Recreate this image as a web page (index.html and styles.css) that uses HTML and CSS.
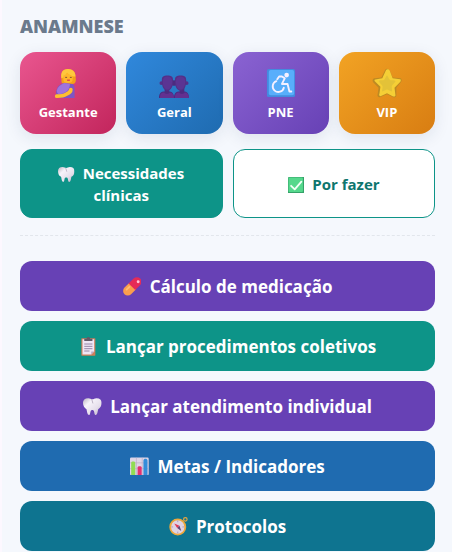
FILE: index.html
```html
<!DOCTYPE html>
<html lang="pt-BR">
<head>
    <meta charset="UTF-8">
    <meta name="viewport" content="width=device-width, initial-scale=1.0">
    <title>Anamnese</title>
    <link rel="stylesheet" href="styles.css">
</head>
<body>

<svg class="defs" aria-hidden="true">
    <defs>
        <linearGradient id="toothFill" x1="0" y1="0" x2="1" y2="1">
            <stop offset="0" stop-color="#b9b3bf"/>
            <stop offset="0.3" stop-color="#f7f3fa"/>
            <stop offset="0.65" stop-color="#e6dfeb"/>
            <stop offset="1" stop-color="#b9a9c4"/>
        </linearGradient>
    </defs>
    <symbol id="tooth" viewBox="0 0 32 32">
        <path fill="url(#toothFill)" d="M9 2C3 2 0 5 0 10c0 5 2 9 6 11 1 4 1 9 4 10 3 0 2-7 4-8 1-1 3-1 4 0 2 2 1 8 4 8 3-1 3-6 4-10 4-2 6-6 6-11 0-5-3-8-9-8-3 0-5 2-7 2S12 2 9 2z"/>
        <path fill="none" stroke="#b5aabd" stroke-width="1.5" d="M15 4l2 7"/>
    </symbol>
</svg>

<main class="panel">
    <h2 class="section-title">ANAMNESE</h2>

    <div class="tiles">
        <button type="button" class="tile tile-gestante">
            <svg class="tile-icon" viewBox="0 0 32 32" aria-hidden="true">
                <path fill="#f4a018" d="M9 12C8 5 10 1 16 1c6 0 8 4 8 8 1 5 0 8-3 8h-9c-3 0-3-2-3-5z"/>
                <path fill="#ffc83d" d="M9 11c-1-6 1-10 7-10 5 0 8 3 8 8-5 0-7-2-9-4-1 3-3 5-6 6z"/>
                <path fill="#ffb72b" d="M11 8c2 0 3-2 4-3 2 2 4 3 6 4v3c0 3-2 4-5 4s-5-1-5-4z"/>
                <path fill="#7e55c4" d="M12 16l9 1c2 1 2 4 2 7v8H8c-4-2-6-5-4-9 1-4 4-6 8-7z"/>
                <path fill="#a073dc" d="M12 16c-4 2-7 4-8 8 0 2 1 4 3 4 7-1 11-5 11-11z"/>
                <path fill="none" stroke="#ffc02e" stroke-width="4" stroke-linecap="round" stroke-linejoin="round" d="M19 23c0 2-2 4-5 5-3 2-6 2-10 2"/>
                <path fill="none" stroke="#78513a" stroke-width="1" d="M13 10h2M18 10h2"/>
                <path fill="none" stroke="#dc334c" stroke-width="1.3" d="M15 13h3"/>
            </svg>
            <span>Gestante</span>
        </button>
        <button type="button" class="tile tile-geral">
            <svg class="tile-icon" viewBox="0 0 32 32" aria-hidden="true">
                <path fill="#4c2b80" d="M0 32c0-5 2-7 6-7h4c4 0 6 2 6 7zM16 32c0-5 2-7 6-7h4c4 0 6 2 6 7z"/>
                <path fill="#633090" d="M1 32c0-4 1-6 5-6 1 2 4 2 5 0 3 0 5 2 5 6zM17 32c0-4 1-6 5-6 1 2 4 2 5 0 3 0 5 2 5 6z"/>
                <path fill="#4c2b80" d="M6 20h5v7H6zM22 20h5v7h-5z"/>
                <circle cx="2.500" cy="16" r="2" fill="#54308a"/>
                <circle cx="16" cy="16" r="3" fill="#4c2b80"/>
                <circle cx="29.500" cy="16" r="2" fill="#54308a"/>
                <path fill="#533087" d="M3 13c0-4 2-5 6-5s6 1 6 5c0 7-2 11-6 11s-6-4-6-11zM17 13c0-4 2-5 6-5s6 1 6 5c0 7-2 11-6 11s-6-4-6-11z"/>
                <path fill="#5b3493" d="M4 14c0-3 2-5 5-5s5 2 5 5c0 5-2 9-5 9s-5-4-5-9zM18 14c0-3 2-5 5-5s5 2 5 5c0 5-2 9-5 9s-5-4-5-9z"/>
            </svg>
            <span>Geral</span>
        </button>
        <button type="button" class="tile tile-pne">
            <svg class="tile-icon" viewBox="0 0 32 32" aria-hidden="true">
                <rect x="1" y="1" width="30" height="30" rx="2" fill="#438bdf"/>
                <rect x="3" y="2" width="27" height="27" rx="2" fill="#58aefb"/>
                <circle cx="22" cy="7.500" r="2.500" fill="#f5f0ff"/>
                <g fill="none" stroke="#f5f0ff" stroke-width="2" stroke-linecap="round" stroke-linejoin="round">
                    <path d="M12 12l2-3h3l3 2-3 6h6l2 8h2"/>
                    <path d="M11 14a6 6 0 1 0 8 7"/>
                </g>
            </svg>
            <span>PNE</span>
        </button>
        <button type="button" class="tile tile-vip">
            <svg class="tile-icon" viewBox="0 0 32 32" aria-hidden="true">
                <path fill="#bd8a23" d="M14 2c1-2 4-1 5 1l3 7 8 1c2 0 2 3 1 4l-5 6v8c0 2-2 3-4 2l-6-3-7 3c-2 1-4-1-3-3l1-7-6-6c-1-2 0-4 2-4l7-1z"/>
                <path fill="#f5cf36" d="M15 2c1-1 3-1 4 1l3 8 8 1c1 0 1 2 0 3l-6 6 1 8c0 1-1 2-3 1l-6-3-7 3c-1 0-2-1-1-3l1-7-6-6c-1-1 0-2 2-2l6-1z"/>
                <path fill="#e3c238" d="M16 8c1 0 2 5 4 5s5 0 5 1-4 4-4 6 1 5 0 5-4-2-5-2-4 2-5 2 1-4 0-6-4-4-4-5 3-1 5-1 3-5 4-5z"/>
            </svg>
            <span>VIP</span>
        </button>
    </div>

    <div class="filters">
        <button type="button" class="filter filter-active">
            <svg class="emoji" viewBox="0 0 32 32" aria-hidden="true"><use href="#tooth"/></svg>
            Necessidades clínicas
        </button>
        <button type="button" class="filter">
            <svg class="emoji" viewBox="0 0 32 32" aria-hidden="true">
                <rect x="0" y="0" width="32" height="32" rx="2" fill="#35a269"/>
                <rect x="1" y="1" width="28" height="28" rx="2" fill="#55d88c"/>
                <path fill="none" stroke="#f2fff7" stroke-width="3.500" stroke-linecap="round" stroke-linejoin="round" d="M6 17l7 7L26 9"/>
            </svg>
            Por fazer
        </button>
    </div>

    <hr class="divider">

    <nav class="actions">
        <button type="button" class="action purple">
            <svg class="emoji" viewBox="0 0 32 32" aria-hidden="true">
                <g transform="rotate(-45 16 16)">
                    <path fill="#fa9e4d" d="M17 8H5a8 8 0 0 0 0 16h12z"/>
                    <path fill="#e52b57" d="M15 8h12a8 8 0 0 1 0 16H15z"/>
                    <path fill="none" stroke="#ffbd71" stroke-width="3" stroke-linecap="round" d="M5 13h7"/>
                </g>
                <circle cx="26" cy="8" r="2.500" fill="#ffc5d7"/>
            </svg>
            Cálculo de medicação
        </button>
        <button type="button" class="action teal">
            <svg class="emoji" viewBox="0 0 32 32" aria-hidden="true">
                <rect x="4" y="2" width="24" height="30" rx="1" fill="#cf7d58"/>
                <path fill="#eee6f5" d="M6 4h20v21l-5 5H6z"/>
                <path fill="#b7a9c4" d="M26 25h-5v5z"/>
                <path fill="#635968" d="M9 3h4c0-4 6-4 6 0h4v4H9z"/>
                <path fill="none" stroke="#8b7a9e" stroke-width="1.500" d="M9 12h14M9 16h14M9 20h14M9 24h9"/>
            </svg>
            Lançar procedimentos coletivos
        </button>
        <button type="button" class="action purple">
            <svg class="emoji" viewBox="0 0 32 32" aria-hidden="true"><use href="#tooth"/></svg>
            Lançar atendimento individual
        </button>
        <button type="button" class="action blue">
            <svg class="emoji" viewBox="0 0 32 32" aria-hidden="true">
                <rect x="0" y="1" width="32" height="30" rx="2" fill="#ded5e7"/>
                <path fill="none" stroke="#b7a9c4" stroke-width="1" d="M0 10h32M0 20h32M11 1v30M21 1v30"/>
                <path fill="#91dc53" d="M2 10c0-3 7-3 7 0v21H2z"/>
                <path fill="#e43170" d="M13 18c0-3 7-3 7 0v13h-7z"/>
                <path fill="#348ddb" d="M23 6c0-4 7-4 7 0v25h-7z"/>
            </svg>
            Metas / Indicadores
        </button>
        <button type="button" class="action cyan">
            <svg class="emoji" viewBox="0 0 32 32" aria-hidden="true">
                <circle cx="28" cy="4" r="3" fill="none" stroke="#eaa63e" stroke-width="2"/>
                <circle cx="15" cy="17" r="13" fill="#dfd4e5" stroke="#efa83b" stroke-width="3"/>
                <path fill="none" stroke="#a895b5" stroke-width="1.500" d="M15 6v3M15 25v3M4 17h3M23 17h3"/>
                <path fill="#e23756" d="M9 11l9 4-4 4z"/>
                <path fill="#614779" d="M21 24l-3-9-4 4z"/>
            </svg>
            Protocolos
        </button>
    </nav>
</main>

</body>
</html>
```
FILE: styles.css
```css
* {
    box-sizing: border-box;
}

body {
    margin: 0;
    font-family: "Open Sans", "Noto Sans", sans-serif;
    background-color: #f5f8fd;
    border-left: 2px solid #fdf8ff;
}

.defs {
    display: block;
    width: 0;
    height: 0;
}

.panel {
    padding: 13px 17px 2px 18px;
}

.section-title {
    margin: 0 0 13px;
    color: #6b7a8c;
    font-size: 18px;
    font-weight: 800;
    line-height: 26px;
}

button {
    border: none;
    font-family: inherit;
    color: #fff;
    cursor: pointer;
}

.tiles {
    display: grid;
    grid-template-columns: repeat(4, 1fr);
    gap: 10px;
}

.tile {
    display: flex;
    flex-direction: column;
    align-items: center;
    gap: 4px;
    padding: 16px 4px 12px;
    border-radius: 16px;
    box-shadow: 0 4px 16px rgba(30, 50, 90, 0.1);
    font-size: 13px;
    font-weight: 700;
    line-height: 20px;
}

.tile-icon {
    width: 30px;
    height: 30px;
}

.tile-gestante {
    background: linear-gradient(135deg, #e9568f, #c2255c);
}

.tile-geral {
    background: linear-gradient(135deg, #3088dc, #1f6bb0);
}

.tile-pne {
    background: linear-gradient(135deg, #8a63d2, #6741b5);
}

.tile-vip {
    background: linear-gradient(135deg, #f2a324, #d87d12);
}

.filters {
    display: grid;
    grid-template-columns: repeat(2, 1fr);
    gap: 10px;
    margin-top: 15px;
}

.filter {
    padding: 12px 30px 11px;
    border: 1px solid #0d9488;
    border-radius: 12px;
    background-color: #fff;
    color: #0f766e;
    font-size: 15px;
    font-weight: 700;
    line-height: 22px;
}

.filter-active {
    background-color: #0d9488;
    color: #fff;
}

.emoji {
    width: 1.1em;
    height: 1.1em;
    margin-right: 4px;
    vertical-align: -3px;
}

.divider {
    margin: 17px 0 25px;
    border: none;
    border-top: 1px dashed #e2e6ec;
}

.actions {
    display: flex;
    flex-direction: column;
    gap: 10px;
}

.action {
    padding: 13px 16px 11px;
    border-radius: 12px;
    font-size: 17px;
    font-weight: 700;
    line-height: 26px;
}

.purple {
    background-color: #6741b5;
}

.teal {
    background-color: #0d9488;
}

.blue {
    background-color: #1f6bb0;
}

.cyan {
    background-color: #0e7490;
}
```
